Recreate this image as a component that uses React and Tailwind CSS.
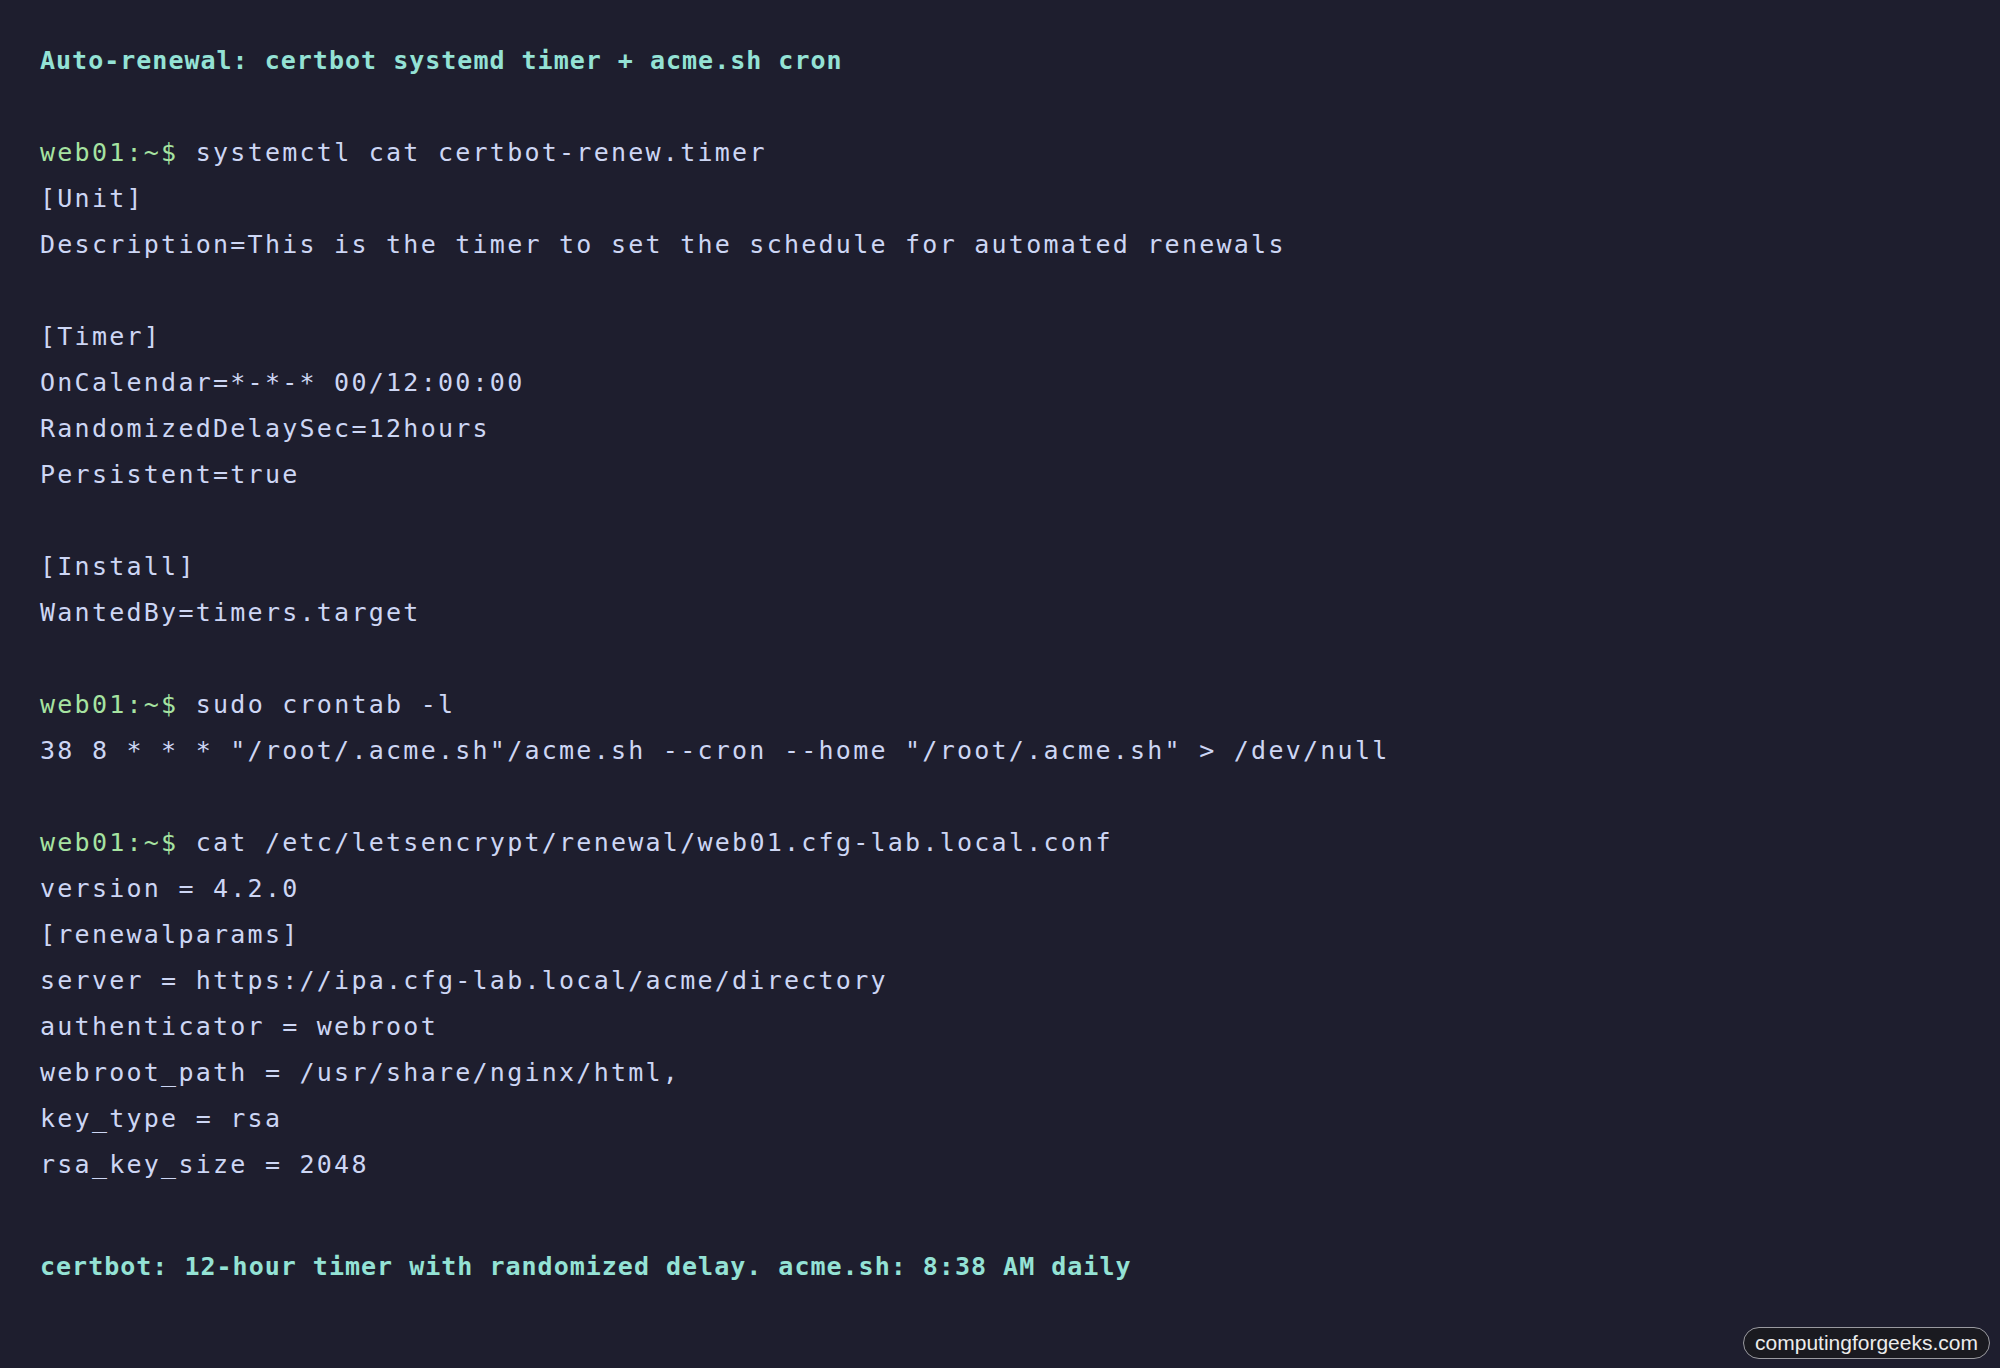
import React from "react";

const mono = "font-['DejaVu_Sans_Mono','Liberation_Mono',monospace]";

function Line({ children }) {
  return <div className="h-[46px] leading-[46px] whitespace-pre">{children}</div>;
}

function Prompt({ cmd }) {
  return (
    <Line>
      <span className="text-[#a6e3a1]">web01:~$</span> {cmd}
    </Line>
  );
}

function Note({ children }) {
  return (
    <div className="h-[46px] leading-[46px] whitespace-pre font-bold text-[#94e2d5] tracking-[1px]">
      {children}
    </div>
  );
}

export default function App() {
  return (
    <div className="relative w-full h-[1368px] overflow-hidden bg-[#1e1e2e]">
      <div className={`${mono} text-[25px] text-[#cdd6f4] tracking-[2.25px] pl-[40px] pt-[38px]`}>
        <Note>Auto-renewal: certbot systemd timer + acme.sh cron</Note>
        <Line> </Line>
        <Prompt cmd="systemctl cat certbot-renew.timer" />
        <Line>[Unit]</Line>
        <Line>Description=This is the timer to set the schedule for automated renewals</Line>
        <Line> </Line>
        <Line>[Timer]</Line>
        <Line>OnCalendar=*-*-* 00/12:00:00</Line>
        <Line>RandomizedDelaySec=12hours</Line>
        <Line>Persistent=true</Line>
        <Line> </Line>
        <Line>[Install]</Line>
        <Line>WantedBy=timers.target</Line>
        <Line> </Line>
        <Prompt cmd="sudo crontab -l" />
        <Line>38 8 * * * "/root/.acme.sh"/acme.sh --cron --home "/root/.acme.sh" &gt; /dev/null</Line>
        <Line> </Line>
        <Prompt cmd="cat /etc/letsencrypt/renewal/web01.cfg-lab.local.conf" />
        <Line>version = 4.2.0</Line>
        <Line>[renewalparams]</Line>
        <Line>server = https://ipa.cfg-lab.local/acme/directory</Line>
        <Line>authenticator = webroot</Line>
        <Line>webroot_path = /usr/share/nginx/html,</Line>
        <Line>key_type = rsa</Line>
        <Line>rsa_key_size = 2048</Line>
        <Line> </Line>
        <div className="mt-[10px]">
          <Note>certbot: 12-hour timer with randomized delay. acme.sh: 8:38 AM daily</Note>
        </div>
      </div>
      <div className="absolute right-[10px] bottom-[9px] h-[32px] px-[11px] flex items-center rounded-full border border-[#9a9aa0] bg-[#1a1a20] text-[#ececec] text-[21px] font-['Liberation_Sans',Arial,sans-serif]">
        computingforgeeks.com
      </div>
    </div>
  );
}
